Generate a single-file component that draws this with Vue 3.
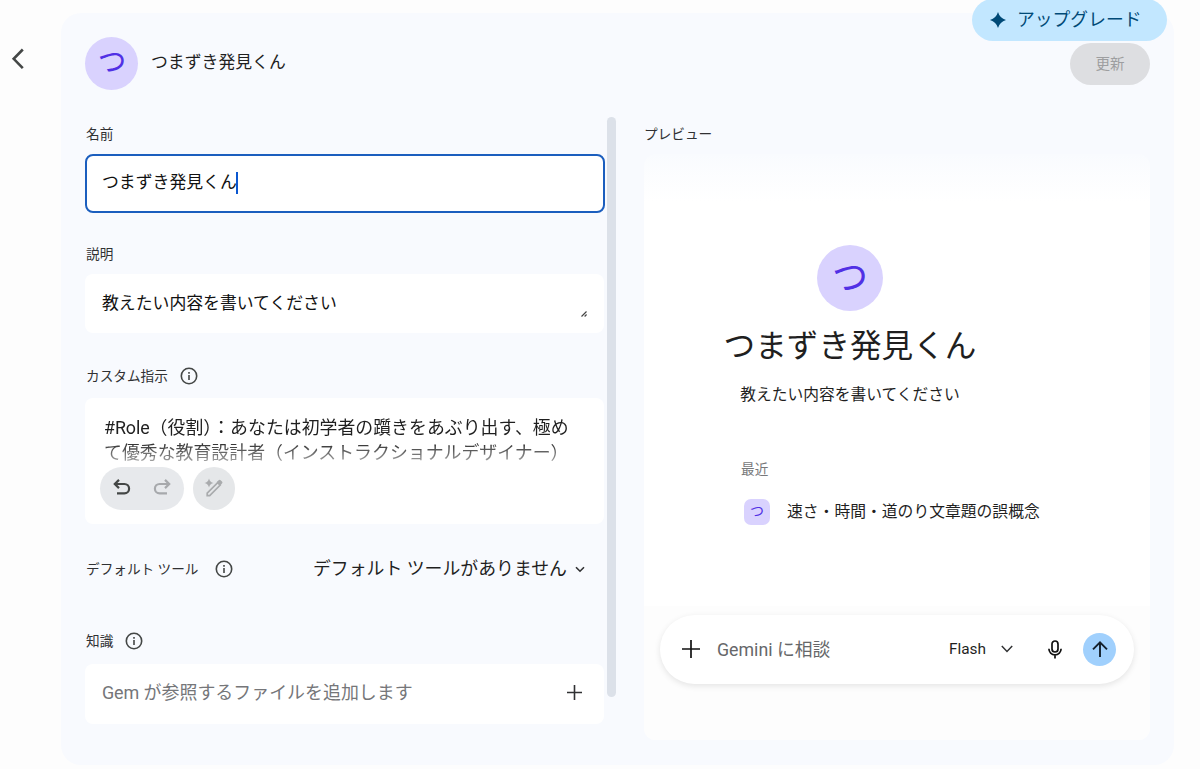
<script setup>
const name = 'つまずき発見くん'
const description = '教えたい内容を書いてください'
</script>

<template>
  <div class="page">
    <button class="back" aria-label="戻る">
      <svg width="14" height="22" viewBox="0 0 14 22"><path d="M11.8 1.5 2.7 10.8l9.1 9.3" /></svg>
    </button>
    <button class="upgrade">
      <svg width="16" height="16" viewBox="0 0 16 16"><path d="M8 0Q9.8 6.2 16 8Q9.8 9.8 8 16Q6.2 9.8 0 8Q6.2 6.2 8 0Z" /></svg>
      <span>アップグレード</span>
    </button>
    <main class="panel">
      <header class="header">
        <div class="avatar"><span>つ</span></div>
        <h1>{{ name }}</h1>
        <button class="update">更新</button>
      </header>
      <div class="columns">
        <section class="editor">
          <div class="form">
            <div class="label label-name">名前</div>
            <div class="field focused"><span>{{ name }}</span><i class="caret"></i></div>
            <div class="label label-desc">説明</div>
            <div class="field desc">
              <span>{{ description }}</span>
              <svg class="grip" width="6" height="6" viewBox="0 0 6 6"><path d="M.5 5.5l5-5M3.6 5.5l2-2" /></svg>
            </div>
            <div class="label label-custom">
              <span>カスタム指示</span>
              <svg class="info" width="18" height="18" viewBox="0 0 18 18"><circle cx="9" cy="9" r="7.7" /><path d="M9 8v5M9 5v1.7" /></svg>
            </div>
            <div class="field custom">
              <div class="instructions">
                <div><span class="role">#Role</span>（役割）：あなたは初学者の躓きをあぶり出す、極め</div>
                <div>て優秀な教育設計者（インストラクショナルデザイナー）</div>
              </div>
              <div class="tools">
                <div class="history">
                  <svg width="18" height="17" viewBox="0 0 18 17"><path d="M6 .9 1.800 5l4.200 4.100M2 5h9.400a4.700 4.700 0 0 1 0 9.400H4" /></svg>
                  <svg class="off" width="18" height="17" viewBox="0 0 18 17"><path d="M12 .9 16.200 5 12 9.100M16 5H6.600a4.700 4.700 0 0 0 0 9.400H14" /></svg>
                </div>
                <div class="magic">
                  <svg width="20" height="20" viewBox="0 0 20 20">
                    <path class="solid" d="M5 .5Q5.900 4.100 9.500 5Q5.900 5.900 5 9.500Q4.100 5.900 .5 5Q4.100 4.100 5 .5Z" />
                    <path d="M3.200 15.100 13.700 4.600l2.500 2.500L5.700 17.600H3.200Z" />
                    <path class="solid" d="m12.600 4.200 2-2q1-.8 2 0l1.400 1.400q1 1 0 2l-2 2Z" />
                  </svg>
                </div>
              </div>
            </div>
            <div class="tool-row">
              <span class="tool-label">デフォルト ツール</span>
              <svg class="info" width="18" height="18" viewBox="0 0 18 18"><circle cx="9" cy="9" r="7.7" /><path d="M9 8v5M9 5v1.7" /></svg>
              <div class="select">
                <span>デフォルト ツールがありません</span>
                <svg width="10" height="7" viewBox="0 0 10 7"><path d="M1 1.2l4 4 4-4" /></svg>
              </div>
            </div>
            <div class="label label-know">
              <span>知識</span>
              <svg class="info" width="18" height="18" viewBox="0 0 18 18"><circle cx="9" cy="9" r="7.7" /><path d="M9 8v5M9 5v1.7" /></svg>
            </div>
            <div class="field know">
              <span><span class="gem">Gem</span> が参照するファイルを追加します</span>
              <svg width="15" height="15" viewBox="0 0 15 15"><path d="M7.5 0v15M0 7.5h15" /></svg>
            </div>
          </div>
          <div class="scrollbar"></div>
        </section>
        <section class="preview-col">
          <div class="label preview-label">プレビュー</div>
          <div class="preview">
            <div class="hero">
              <div class="avatar big"><span>つ</span></div>
              <h2>{{ name }}</h2>
              <p>{{ description }}</p>
            </div>
            <div class="recent-label">最近</div>
            <div class="recent">
              <div class="badge"><span>つ</span></div>
              <span>速さ・時間・道のり文章題の誤概念</span>
            </div>
            <div class="footer">
              <div class="prompt">
                <svg class="plus" width="18" height="18" viewBox="0 0 18 18"><path d="M9 0v18M0 9h18" /></svg>
                <span class="ask">Gemini に相談</span>
                <span class="model">Flash</span>
                <svg class="chev" width="12" height="8" viewBox="0 0 12 8"><path d="M.8 1l5.2 5.4L11.2 1" /></svg>
                <svg class="mic" width="14" height="19" viewBox="0 0 14 19"><rect x="4" y="1" width="6" height="11" rx="3" /><path d="M.9 8.8a6.1 6.1 0 0 0 12.2 0M7 14.9V18.5" /></svg>
                <button class="send" aria-label="送信"><svg width="16" height="17" viewBox="0 0 16 17"><path d="M8 16V1.5M1 8.4l7-7 7 7" /></svg></button>
              </div>
            </div>
          </div>
        </section>
      </div>
    </main>
  </div>
</template>

<style>
body { background: #fdfdfd; overflow: hidden; }
</style>
<style scoped>
* { box-sizing: border-box; margin: 0; }
.page {
  position: relative; display: flex; width: 1200px; height: 769px; overflow: hidden;
  font-family: Roboto, "Noto Sans CJK JP", sans-serif; color: #1f1f1f; white-space: nowrap; font-weight: 400;
}
button { border: 0; padding: 0; background: none; font: inherit; }
svg { fill: none; flex: none; display: block; }
.back { width: 61px; height: 22px; margin-top: 48px; padding-left: 11px; text-align: left; }
.back svg { stroke: #444746; stroke-width: 2.6; }
.upgrade {
  position: absolute; left: 972px; top: -1px; width: 195px; height: 42px; border-radius: 21px; background: #c2e7ff;
  display: flex; align-items: center; padding-left: 18px; gap: 11px; color: #004a77; font-size: 17.8px; line-height: 24px;
}
.upgrade svg { fill: #004a77; }
.upgrade span { margin-top: -1px; }
.panel { width: 1113px; height: 752px; margin-top: 13px; padding: 24px 24px 0; background: #f8fafe; border-radius: 20px; }
.header { display: flex; height: 80px; align-items: flex-start; }
.avatar { width: 53px; height: 53px; border-radius: 50%; background: #d9d2fe; color: #5130e5; display: flex; align-items: center; justify-content: center; font-size: 28.5px; line-height: 40px; }
.avatar span { margin: -2px 0 0 1px; }
h1 { font-size: 16.85px; font-weight: 400; line-height: 24px; margin: 13px 0 0 13px; }
.update { margin: 6px 0 0 auto; width: 80px; height: 42px; border-radius: 21px; background: #dddee1; color: #9d9ea0; font-size: 14.6px; line-height: 42px; }
.columns { display: flex; gap: 28px; }
.editor { display: flex; width: 531px; }
.form { width: 519px; }
.scrollbar { width: 9.5px; height: 580px; margin-left: 3px; border-radius: 5px; background: #dce1e9; }
.label { display: flex; align-items: center; height: 20px; padding-left: 1px; font-size: 13.65px; line-height: 20px; color: #303133; }
.info { stroke: #444746; stroke-width: 1.6; }
.label-name { margin: 7px 0 10px; }
.field { height: 59px; background: #fff; border-radius: 8px; font-size: 16.85px; line-height: 24px; }
.focused { display: flex; align-items: flex-start; width: 519.5px; border: 2px solid #1b5ebe; padding: 14px 15px; color: #111; }
.caret { width: 2px; height: 22px; margin: 2px 0 0 -1px; background: #0b57d0; }
.label-desc { margin: 31px 0 10px; }
.desc { display: flex; padding: 17px 17px 0; justify-content: space-between; color: #111; }
.grip { stroke: #444; stroke-width: 1.2; margin-top: 20px; }
.label-custom { margin: 33px 0 12px; gap: 12px; }
.custom { height: 126px; padding: 17px 15px 0; }
.instructions { height: 47px; padding-left: 4px; overflow: hidden; font-size: 17.9px; line-height: 25px; -webkit-mask-image: linear-gradient(#000 55%, rgba(0, 0, 0, .4)); mask-image: linear-gradient(#000 55%, rgba(0, 0, 0, .4)); }
.role { letter-spacing: -.1px; }
.tools { display: flex; gap: 9px; margin-top: 5px; }
.history { width: 84px; height: 42.5px; border-radius: 22px; background: #e7e9ec; display: flex; align-items: center; gap: 22px; padding-left: 13px; }
.history svg { stroke: #444746; stroke-width: 2.2; margin-top: -1px; }
.history .off { stroke: #a7a9ac; }
.magic { width: 42px; height: 42.5px; border-radius: 50%; background: #e5e7e9; display: flex; align-items: center; justify-content: center; }
.magic svg { stroke: #a9abad; stroke-width: 1.7; }
.magic .solid { fill: #a9abad; stroke: none; }
.tool-row { display: flex; align-items: center; height: 24px; margin-top: 33px; padding-left: 1px; }
.tool-label { width: 111px; margin: -2px 18px 0 0; font-size: 13.65px; color: #303133; }
.select { display: flex; align-items: center; gap: 8px; margin-left: 80px; font-size: 17.87px; line-height: 24px; }
.select svg { stroke: #303133; stroke-width: 1.6; }
.label-know { margin: 50px 0 13px; gap: 12px; }
.know { height: 60px; padding: 17px 22px 0 17px; display: flex; align-items: flex-start; justify-content: space-between; color: #757679; font-size: 17.95px; }
.gem { letter-spacing: -.1px; }
.know svg { stroke: #303133; stroke-width: 1.6; margin-top: 4px; }
.preview-col { width: 506px; }
.preview-label { margin: 7px 0 10px; padding: 0; }
.preview { display: flex; flex-direction: column; height: 586px; border-radius: 12px; background: linear-gradient(#f9fbfe, #fff 48px); overflow: hidden; }
.hero { display: flex; flex-direction: column; align-items: center; padding-top: 91px; width: 412px; }
.avatar.big { width: 66px; height: 66px; font-size: 36px; }
.avatar.big span { margin: -1px 0 0; }
h2 { font-size: 31.6px; line-height: 44px; font-weight: 400; margin-top: 14px; }
.hero p { font-size: 15.75px; line-height: 24px; margin-top: 14px; }
.recent-label { margin: 52px 0 0 97px; font-size: 13.65px; line-height: 20px; color: #77787a; }
.recent { display: flex; align-items: center; margin: 20px 0 0 100px; gap: 17px; font-size: 15.8px; line-height: 24px; }
.badge { width: 26px; height: 26px; border-radius: 7px; background: #d9d2fe; color: #5130e5; display: flex; align-items: center; justify-content: center; font-size: 14px; line-height: 20px; }
.badge span { margin-top: -2px; }
.footer { margin-top: auto; height: 134px; padding: 9px 16px 0; background: #fdfdfd; }
.prompt { display: flex; align-items: center; width: 473.5px; height: 69px; border-radius: 35px; background: #fff; box-shadow: 0 2px 6px rgba(0, 0, 0, .1); padding-left: 22px; }
.plus { stroke: #111; stroke-width: 1.7; margin-top: -1px; }
.ask { width: 232px; margin: 1px 0 0 17px; font-size: 17.75px; line-height: 24px; color: #666769; }
.model { width: 38px; font-size: 15.4px; line-height: 24px; color: #1f1f1f; margin-top: -1px; }
.chev { margin: -2px 0 0 14px; stroke: #303133; stroke-width: 1.5; }
.mic { margin: -1px 0 0 35px; stroke: #111; stroke-width: 1.7; }
.send { width: 33px; height: 33px; margin-left: 21px; border-radius: 50%; background: #a0d0fd; display: flex; align-items: center; justify-content: center; }
.send svg { stroke: #14202c; stroke-width: 1.9; margin-top: -1px; }
</style>
